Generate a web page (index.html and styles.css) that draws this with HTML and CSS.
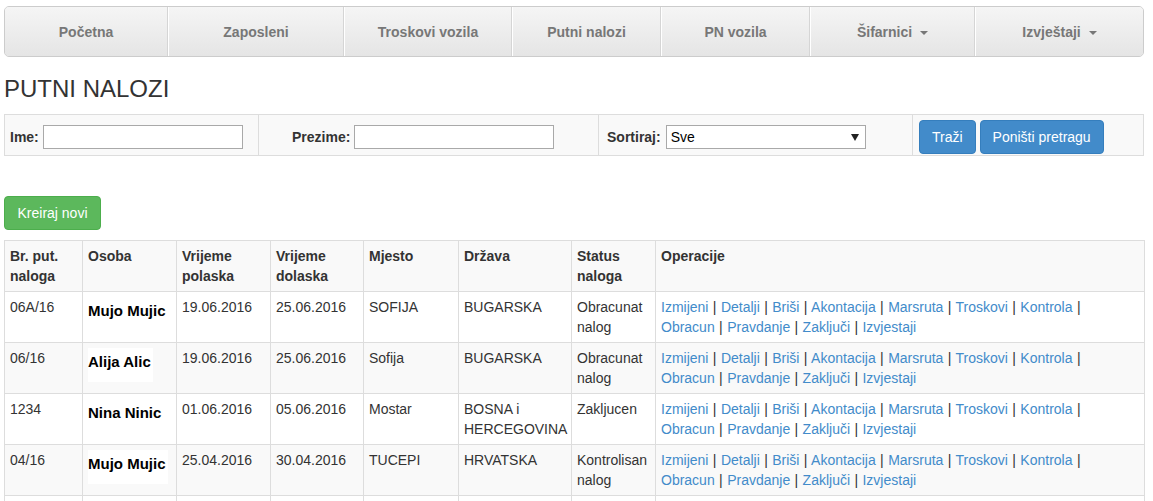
FILE: index.html
```
<!DOCTYPE html>
<html lang="bs">
<head>
<meta charset="utf-8">
<title>Putni nalozi</title>
<link rel="stylesheet" href="styles.css">
</head>
<body>
<div class="page">
  <nav class="topnav">
    <a class="nav-item" href="#">Početna</a>
    <a class="nav-item" href="#">Zaposleni</a>
    <a class="nav-item" href="#">Troskovi vozila</a>
    <a class="nav-item" href="#">Putni nalozi</a>
    <a class="nav-item" href="#">PN vozila</a>
    <a class="nav-item" href="#">Šifarnici <span class="caret"></span></a>
    <a class="nav-item" href="#">Izvještaji <span class="caret"></span></a>
  </nav>

  <h3 class="title">PUTNI NALOZI</h3>

  <div class="search">
    <div class="cell cell-ime">
      <label class="lbl">Ime:</label>
      <input class="txt" type="text">
    </div>
    <div class="cell cell-prezime">
      <label class="lbl">Prezime:</label>
      <input class="txt" type="text">
    </div>
    <div class="cell cell-sort">
      <label class="lbl">Sortiraj:</label>
      <span class="sel">Sve</span>
    </div>
    <div class="cell cell-btns">
      <button class="btn btn-primary">Traži</button>
      <button class="btn btn-primary">Poništi pretragu</button>
    </div>
  </div>

  <button class="btn btn-success create">Kreiraj novi</button>

  <table class="grid">
    <colgroup>
      <col class="w1"><col class="w2"><col class="w3"><col class="w4"><col class="w5"><col class="w6"><col class="w7"><col class="w8">
    </colgroup>
    <tbody>
      <tr class="head">
        <th>Br. put. naloga</th>
        <th>Osoba</th>
        <th>Vrijeme polaska</th>
        <th>Vrijeme dolaska</th>
        <th>Mjesto</th>
        <th>Država</th>
        <th>Status naloga</th>
        <th>Operacije</th>
      </tr>
      <tr>
        <td>06A/16</td>
        <td><span class="name">Mujo Mujic</span></td>
        <td>19.06.2016</td>
        <td>25.06.2016</td>
        <td>SOFIJA</td>
        <td>BUGARSKA</td>
        <td>Obracunat nalog</td>
        <td class="ops"><a href="#">Izmijeni</a> | <a href="#">Detalji</a> | <a href="#">Briši</a> | <a href="#">Akontacija</a> | <a href="#">Marsruta</a> | <a href="#">Troskovi</a> | <a href="#">Kontrola</a> |<br><a href="#">Obracun</a> | <a href="#">Pravdanje</a> | <a href="#">Zaključi</a> | <a href="#">Izvjestaji</a></td>
      </tr>
      <tr class="alt">
        <td>06/16</td>
        <td><span class="name">Alija Alic</span></td>
        <td>19.06.2016</td>
        <td>25.06.2016</td>
        <td>Sofija</td>
        <td>BUGARSKA</td>
        <td>Obracunat nalog</td>
        <td class="ops"><a href="#">Izmijeni</a> | <a href="#">Detalji</a> | <a href="#">Briši</a> | <a href="#">Akontacija</a> | <a href="#">Marsruta</a> | <a href="#">Troskovi</a> | <a href="#">Kontrola</a> |<br><a href="#">Obracun</a> | <a href="#">Pravdanje</a> | <a href="#">Zaključi</a> | <a href="#">Izvjestaji</a></td>
      </tr>
      <tr>
        <td>1234</td>
        <td><span class="name">Nina Ninic</span></td>
        <td>01.06.2016</td>
        <td>05.06.2016</td>
        <td>Mostar</td>
        <td>BOSNA i HERCEGOVINA</td>
        <td>Zakljucen</td>
        <td class="ops"><a href="#">Izmijeni</a> | <a href="#">Detalji</a> | <a href="#">Briši</a> | <a href="#">Akontacija</a> | <a href="#">Marsruta</a> | <a href="#">Troskovi</a> | <a href="#">Kontrola</a> |<br><a href="#">Obracun</a> | <a href="#">Pravdanje</a> | <a href="#">Zaključi</a> | <a href="#">Izvjestaji</a></td>
      </tr>
      <tr class="alt">
        <td>04/16</td>
        <td><span class="name">Mujo Mujic</span></td>
        <td>25.04.2016</td>
        <td>30.04.2016</td>
        <td>TUCEPI</td>
        <td>HRVATSKA</td>
        <td>Kontrolisan nalog</td>
        <td class="ops"><a href="#">Izmijeni</a> | <a href="#">Detalji</a> | <a href="#">Briši</a> | <a href="#">Akontacija</a> | <a href="#">Marsruta</a> | <a href="#">Troskovi</a> | <a href="#">Kontrola</a> |<br><a href="#">Obracun</a> | <a href="#">Pravdanje</a> | <a href="#">Zaključi</a> | <a href="#">Izvjestaji</a></td>
      </tr>
      <tr class="blank">
        <td></td>
        <td></td>
        <td></td>
        <td></td>
        <td></td>
        <td></td>
        <td></td>
        <td></td>
      </tr>
    </tbody>
  </table>
</div>
</body>
</html>
```

FILE: styles.css
```
* { box-sizing: border-box; }

html, body {
  margin: 0;
  padding: 0;
  background: #fff;
}

body {
  font-family: "Liberation Sans", Arial, Helvetica, sans-serif;
  font-size: 14px;
  line-height: 20px;
  color: #333;
  overflow: hidden;
}

.page {
  width: 1140px;
  margin-left: 4px;
  padding-top: 6px;
}

/* ---------- top nav ---------- */
.topnav {
  display: grid;
  grid-template-columns: 163px 176px 168px 149px 149px 165px 168px;
  border: 1px solid #ccc;
  border-radius: 5px;
  background: #eee;
  overflow: hidden;
}

.nav-item {
  display: block;
  padding: 15px 0 14px;
  line-height: 20px;
  font-weight: bold;
  color: #777;
  text-align: center;
  text-decoration: none;
  background-image: linear-gradient(to bottom, #f5f5f5 0%, #e5e5e5 100%);
  border-left: 1px solid #fff;
  border-right: 1px solid #d5d5d5;
}

.nav-item:first-child { border-left: 0; }
.nav-item:last-child { border-right: 0; }

.caret {
  display: inline-block;
  width: 0;
  height: 0;
  margin-left: 4px;
  vertical-align: middle;
  border-top: 4px solid #777;
  border-left: 4px solid transparent;
  border-right: 4px solid transparent;
}

/* ---------- title ---------- */
.title {
  margin: 19px 0 12px;
  font-size: 24px;
  line-height: 26px;
  font-weight: normal;
  color: #333;
}

/* ---------- search bar ---------- */
.search {
  display: flex;
  border: 1px solid #ddd;
  background: #f9f9f9;
}

.cell {
  display: flex;
  align-items: center;
  gap: 4px;
  height: 40px;
  padding-top: 4px;
  padding-bottom: 1px;
  border-right: 1px solid #ddd;
}

.cell-ime { width: 254px; padding-left: 5px; }
.cell-prezime { width: 340px; padding-left: 33px; }
.cell-sort { width: 314px; padding-left: 8px; gap: 5px; }
.cell-btns { width: 230px; padding-left: 6px; border-right: 0; }

.lbl {
  font-weight: bold;
  color: #333;
}

.txt {
  width: 200px;
  height: 24px;
  margin: 0;
  padding: 1px 3px;
  border: 1px solid #a9a9a9;
  background: #fff;
  font: 14px "Liberation Sans", Arial, sans-serif;
}

.sel {
  position: relative;
  display: inline-block;
  width: 200px;
  height: 24px;
  padding: 1px 4px;
  line-height: 20px;
  border: 1px solid #a9a9a9;
  background: #fff;
  color: #000;
  font-size: 14px;
}

.sel::after {
  content: "";
  position: absolute;
  right: 6px;
  top: 8px;
  border-top: 7px solid #222;
  border-left: 4px solid transparent;
  border-right: 4px solid transparent;
}

/* ---------- buttons ---------- */
.btn {
  display: inline-block;
  margin: 0;
  height: 34px;
  padding: 6px 12px;
  font: 14px/20px "Liberation Sans", Arial, sans-serif;
  color: #fff;
  border: 1px solid transparent;
  border-radius: 4px;
  cursor: pointer;
}

.btn-primary {
  background: #428bca;
  border-color: #357ebd;
}

.btn-success {
  background: #5cb85c;
  border-color: #4cae4c;
}

.create {
  display: block;
  width: 97px;
  margin: 40px 0 10px;
}

/* ---------- table ---------- */
.grid {
  width: 1140px;
  border-collapse: collapse;
  table-layout: fixed;
  border: 1px solid #ddd;
}

.w1 { width: 78px; }
.w2 { width: 94px; }
.w3 { width: 94px; }
.w4 { width: 93px; }
.w5 { width: 95px; }
.w6 { width: 113px; }
.w7 { width: 84px; }
.w8 { width: 489px; }

.grid th,
.grid td {
  padding: 5px;
  border: 1px solid #ddd;
  text-align: left;
  vertical-align: top;
  line-height: 20px;
}

.grid th {
  font-weight: bold;
}

.head,
.alt {
  background: #f9f9f9;
}

.blank td {
  height: 51px;
}

.name {
  display: inline-block;
  vertical-align: top;
  padding: 4px 2px 10px 0;
  background: #fff;
  color: #000;
  font-weight: bold;
  font-size: 15px;
  line-height: 20px;
}

.ops {
  word-spacing: 0.5px;
}

.ops a {
  color: #428bca;
  text-decoration: none;
}
```
